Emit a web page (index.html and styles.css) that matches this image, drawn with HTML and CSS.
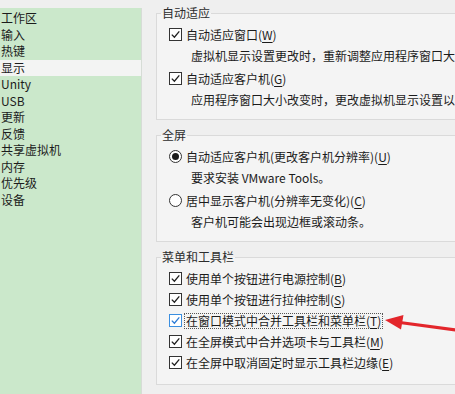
FILE: index.html
```html
<!DOCTYPE html>
<html lang="zh-CN">
<head>
  <meta charset="UTF-8">
  <title>显示设置</title>
  <link rel="stylesheet" href="styles.css">
</head>
<body>
  <div class="window">
    <ul class="nav">
      <li>工作区</li>
      <li>输入</li>
      <li>热键</li>
      <li class="active">显示</li>
      <li>Unity</li>
      <li>USB</li>
      <li>更新</li>
      <li>反馈</li>
      <li>共享虚拟机</li>
      <li>内存</li>
      <li>优先级</li>
      <li>设备</li>
    </ul>

    <div class="settings">
      <fieldset class="group">
        <legend>自动适应</legend>
        <div class="option">
          <span class="box"><svg viewBox="0 0 11 11"><polyline points="1.8,5.6 4.4,8.2 9.3,2.4"/></svg></span>
          <span class="text">自动适应窗口(<u>W</u>)</span>
        </div>
        <p class="desc">虚拟机显示设置更改时，重新调整应用程序窗口大小。</p>
        <div class="option second">
          <span class="box"><svg viewBox="0 0 11 11"><polyline points="1.8,5.6 4.4,8.2 9.3,2.4"/></svg></span>
          <span class="text">自动适应客户机(<u>G</u>)</span>
        </div>
        <p class="desc">应用程序窗口大小改变时，更改虚拟机显示设置以匹配。</p>
      </fieldset>

      <fieldset class="group">
        <legend>全屏</legend>
        <div class="option">
          <span class="radio on"></span>
          <span class="text">自动适应客户机(更改客户机分辨率)(<u>U</u>)</span>
        </div>
        <p class="desc">要求安装 VMware Tools。</p>
        <div class="option second">
          <span class="radio"></span>
          <span class="text">居中显示客户机(分辨率无变化)(<u>C</u>)</span>
        </div>
        <p class="desc">客户机可能会出现边框或滚动条。</p>
      </fieldset>

      <fieldset class="group">
        <legend>菜单和工具栏</legend>
        <div class="option">
          <span class="box"><svg viewBox="0 0 11 11"><polyline points="1.8,5.6 4.4,8.2 9.3,2.4"/></svg></span>
          <span class="text">使用单个按钮进行电源控制(<u>B</u>)</span>
        </div>
        <div class="option">
          <span class="box"><svg viewBox="0 0 11 11"><polyline points="1.8,5.6 4.4,8.2 9.3,2.4"/></svg></span>
          <span class="text">使用单个按钮进行拉伸控制(<u>S</u>)</span>
        </div>
        <div class="option">
          <span class="box focused"><svg viewBox="0 0 11 11"><polyline points="1.8,5.6 4.4,8.2 9.3,2.4"/></svg></span>
          <span class="text focus">在窗口模式中合并工具栏和菜单栏(<u>T</u>)</span>
        </div>
        <div class="option">
          <span class="box"><svg viewBox="0 0 11 11"><polyline points="1.8,5.6 4.4,8.2 9.3,2.4"/></svg></span>
          <span class="text">在全屏模式中合并选项卡与工具栏(<u>M</u>)</span>
        </div>
        <div class="option">
          <span class="box"><svg viewBox="0 0 11 11"><polyline points="1.8,5.6 4.4,8.2 9.3,2.4"/></svg></span>
          <span class="text">在全屏中取消固定时显示工具栏边缘(<u>E</u>)</span>
        </div>
      </fieldset>
    </div>

    <!-- red annotation arrow over the dialog -->
    <svg class="arrow" viewBox="0 0 455 394">
      <line x1="456" y1="330" x2="398" y2="322.2"/>
      <polygon points="385,320 403.5,315 401,329.5"/>
    </svg>
  </div>
</body>
</html>
```

FILE: styles.css
```css
body {
  margin: 0;
  width: 455px;
  height: 394px;
  overflow: hidden;
  background-color: #efefef;
  font-family: "Noto Sans CJK SC", "Liberation Sans", sans-serif;
  font-size: 12px;
  color: #1b1b1b;
}

.window {
  position: relative;
  display: flex;
  align-items: flex-start;
  height: 394px;
}

.nav {
  flex: none;
  list-style: none;
  width: 141px;
  height: 384px;
  margin: 8px 0 0;
  padding: 2px 0 0;
  background-color: #cbe8cb;
  border-right: 1px solid #d6dcd6;
}

.nav li {
  height: 16.5px;
  line-height: 16.5px;
  padding-left: 1px;
  color: #1c1c1c;
  white-space: nowrap;
}

.nav li.active {
  background-color: #f3f4f3;
}

.settings {
  flex: none;
  width: 360px;
  margin-left: 14px;
}

.group {
  margin: 7px 0 0;
  padding: 0 0 8px;
  border: 1px solid #dadada;
  background-color: #f4f4f4;
  min-width: 0;
}

.group:first-child {
  margin-top: 5px;
}

.group:last-child {
  padding-bottom: 11px;
}

.group legend {
  margin-left: 4px;
  padding: 0 1px;
  line-height: 16px;
  color: #2c2c2c;
}

.option {
  display: flex;
  align-items: center;
  height: 21px;
  padding-left: 12px;
  white-space: nowrap;
}

.group legend + .option {
  margin-top: 3px;
}

.option.second {
  margin-top: 1px;
}

.box {
  flex: none;
  display: flex;
  width: 13px;
  height: 13px;
  margin-right: 4px;
  border: 1px solid #333;
  box-sizing: border-box;
  background-color: #fff;
}

.box svg {
  width: 11px;
  height: 11px;
}

.box polyline {
  fill: none;
  stroke: #1f1f1f;
  stroke-width: 1.3;
}

.box.focused {
  border-color: #3b8fe0;
}

.box.focused polyline {
  stroke: #2a7ad6;
}

.radio {
  flex: none;
  display: flex;
  align-items: center;
  justify-content: center;
  width: 13px;
  height: 13px;
  margin-right: 4px;
  border: 1px solid #333;
  border-radius: 50%;
  box-sizing: border-box;
  background-color: #fff;
}

.radio.on::after {
  content: "";
  width: 7px;
  height: 7px;
  border-radius: 50%;
  background-color: #1b1b1b;
}

.text u {
  text-underline-offset: 2px;
}

.text.focus {
  margin-left: -2px;
  padding: 0 1px;
  line-height: 14px;
  border: 1px dotted #555;
}

.desc {
  margin: 0;
  height: 22px;
  line-height: 22px;
  padding-left: 34px;
  white-space: nowrap;
}

.arrow {
  position: absolute;
  left: 0;
  top: 0;
  width: 455px;
  height: 394px;
  pointer-events: none;
}

.arrow line {
  stroke: #e3262b;
  stroke-width: 3;
}

.arrow polygon {
  fill: #e3262b;
}
```
